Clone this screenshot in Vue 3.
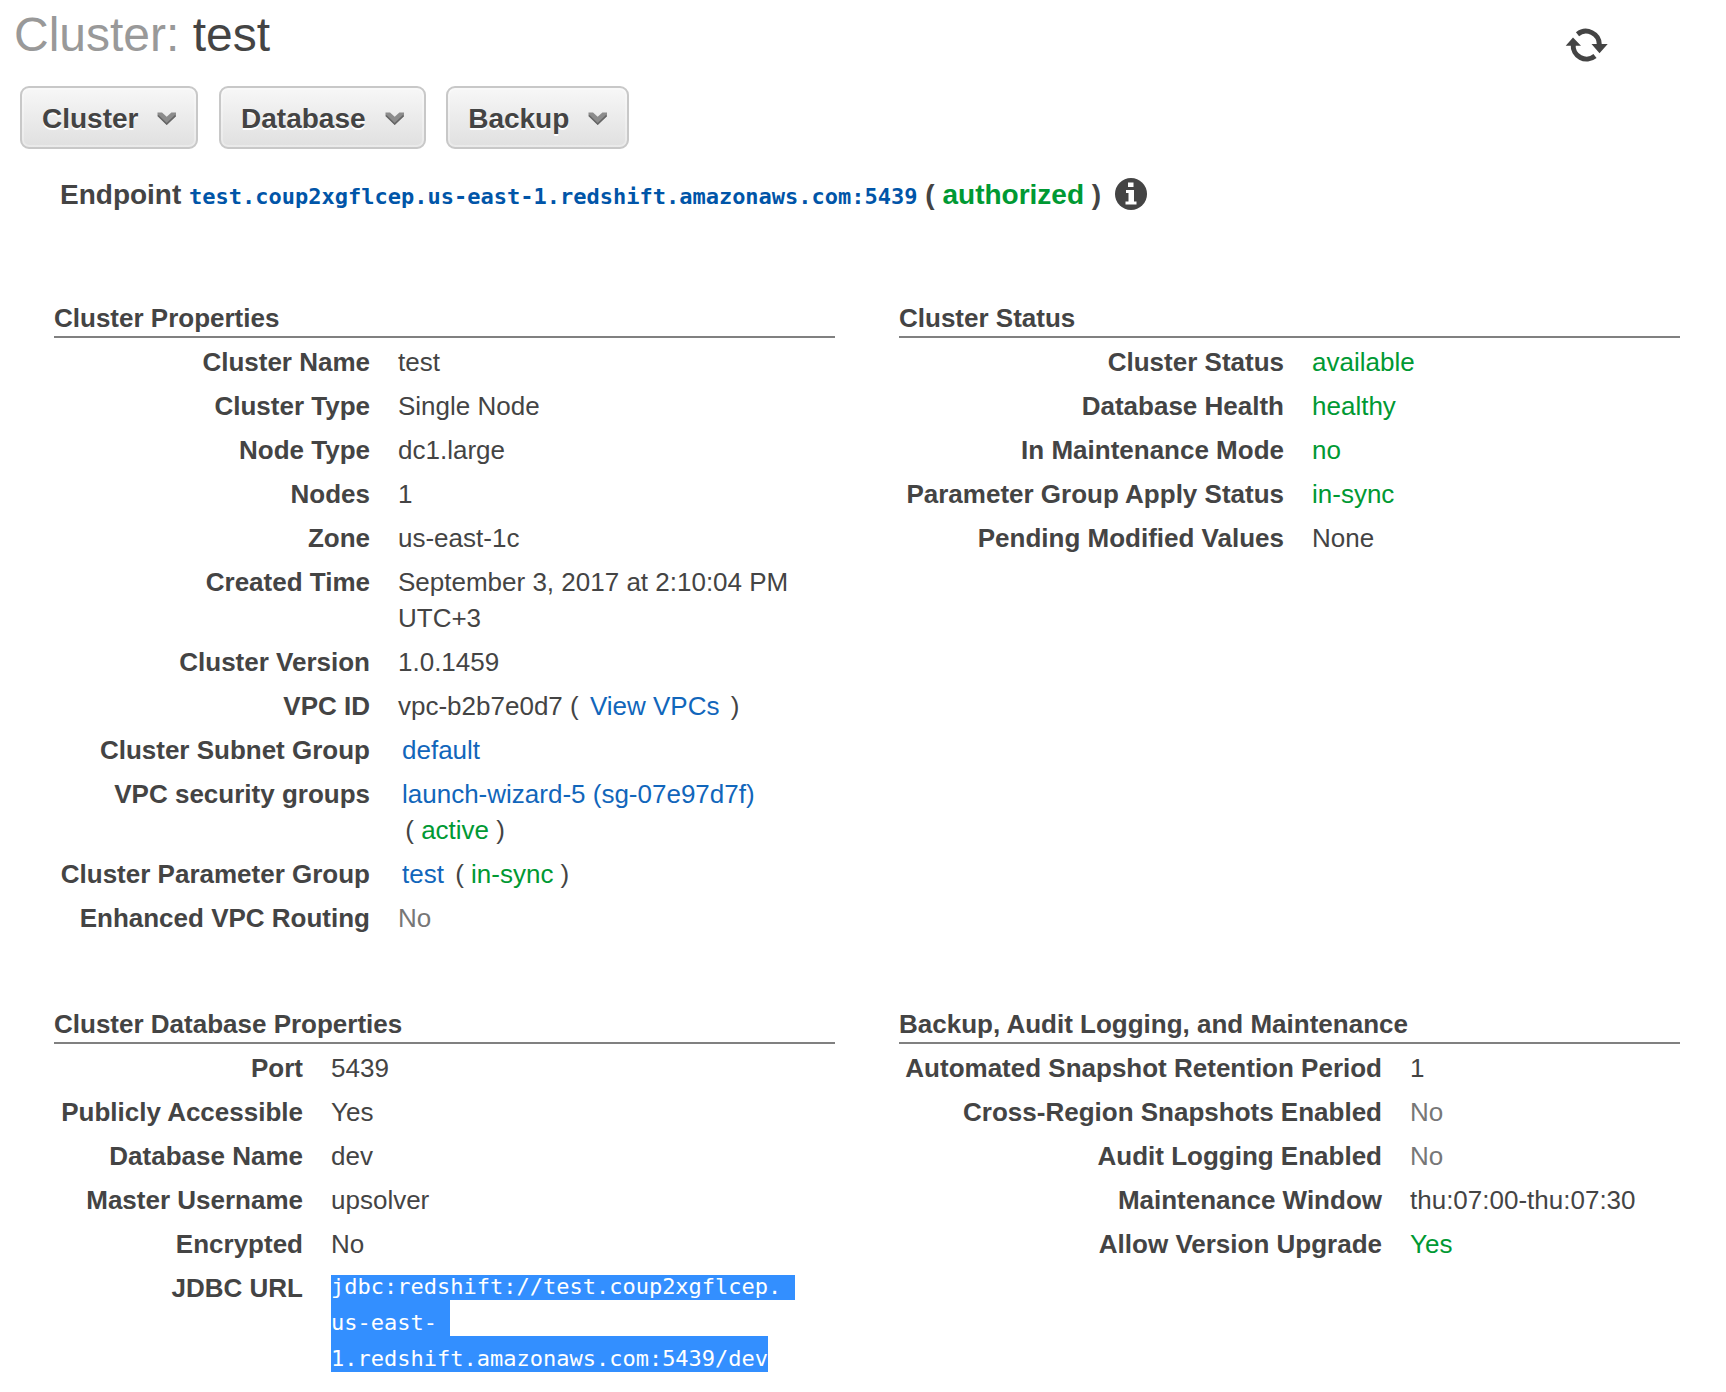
<script setup>
const menus = ['Cluster', 'Database', 'Backup']

const columns = [
  [
    {
      title: 'Cluster Properties',
      kind: 'properties',
      rows: [
        { label: 'Cluster Name', parts: [{ t: 'test' }] },
        { label: 'Cluster Type', parts: [{ t: 'Single Node' }] },
        { label: 'Node Type', parts: [{ t: 'dc1.large' }] },
        { label: 'Nodes', parts: [{ t: '1' }] },
        { label: 'Zone', parts: [{ t: 'us-east-1c' }] },
        { label: 'Created Time', parts: [{ t: 'September 3, 2017 at 2:10:04 PM UTC+3' }] },
        { label: 'Cluster Version', parts: [{ t: '1.0.1459' }] },
        { label: 'VPC ID', parts: [{ t: 'vpc-b2b7e0d7 ( ' }, { t: 'View VPCs', c: 'link' }, { t: ' )' }] },
        { label: 'Cluster Subnet Group', parts: [{ t: 'default', c: 'link' }] },
        {
          label: 'VPC security groups',
          parts: [
            { t: 'launch-wizard-5 (sg-07e97d7f)', c: 'link' },
            { t: '\n' },
            { t: ' ( ' },
            { t: 'active', c: 'good' },
            { t: ' )' },
          ],
        },
        {
          label: 'Cluster Parameter Group',
          parts: [{ t: 'test', c: 'link' }, { t: ' ( ' }, { t: 'in-sync', c: 'good' }, { t: ' )' }],
        },
        { label: 'Enhanced VPC Routing', parts: [{ t: 'No', c: 'muted' }] },
      ],
    },
    {
      title: 'Cluster Database Properties',
      kind: 'database',
      rows: [
        { label: 'Port', parts: [{ t: '5439' }] },
        { label: 'Publicly Accessible', parts: [{ t: 'Yes' }] },
        { label: 'Database Name', parts: [{ t: 'dev' }] },
        { label: 'Master Username', parts: [{ t: 'upsolver' }] },
        { label: 'Encrypted', parts: [{ t: 'No' }] },
        {
          label: 'JDBC URL',
          selected: ['jdbc:redshift://test.coup2xgflcep. ', 'us-east- ', '1.redshift.amazonaws.com:5439/dev'],
        },
      ],
    },
  ],
  [
    {
      title: 'Cluster Status',
      kind: 'status',
      rows: [
        { label: 'Cluster Status', parts: [{ t: 'available', c: 'good' }] },
        { label: 'Database Health', parts: [{ t: 'healthy', c: 'good' }] },
        { label: 'In Maintenance Mode', parts: [{ t: 'no', c: 'good' }] },
        { label: 'Parameter Group Apply Status', parts: [{ t: 'in-sync', c: 'good' }] },
        { label: 'Pending Modified Values', parts: [{ t: 'None' }] },
      ],
    },
    {
      title: 'Backup, Audit Logging, and Maintenance',
      kind: 'backup',
      rows: [
        { label: 'Automated Snapshot Retention Period', parts: [{ t: '1' }] },
        { label: 'Cross-Region Snapshots Enabled', parts: [{ t: 'No', c: 'muted' }] },
        { label: 'Audit Logging Enabled', parts: [{ t: 'No', c: 'muted' }] },
        { label: 'Maintenance Window', parts: [{ t: 'thu:07:00-thu:07:30' }] },
        { label: 'Allow Version Upgrade', parts: [{ t: 'Yes', c: 'good' }] },
      ],
    },
  ],
]
</script>

<template>
  <main class="page">
    <header class="head">
      <h1><span class="prefix">Cluster: </span>test</h1>
      <svg class="refresh" viewBox="0 0 44 34" width="44" height="34">
        <g fill="none" stroke="#444" stroke-width="5">
          <path d="M13.500 6.200A13.400 13.400 0 0 1 35.300 17" />
          <path d="M31 28A13.400 13.400 0 0 1 9.200 16.500" />
        </g>
        <path d="M27.500 16H43.700L35.500 25.300ZM1.700 17.800H17L9 9.500Z" fill="#444" />
      </svg>
    </header>

    <nav class="menus">
      <button v-for="m in menus" :key="m" type="button">
        <span>{{ m }}</span>
        <svg viewBox="0 0 20 14" width="20" height="14">
          <path d="M1.500 .5H6L10.700 4.800L15.400 .5H20V4L10.700 13L1.500 4Z" fill="#8c8c8c" />
          <path d="M2 3.500L10.700 12L19.500 3.500" fill="none" stroke="#666" stroke-width="1.600" />
        </svg>
      </button>
    </nav>

    <p class="endpoint">
      <span class="endpoint-text">Endpoint <code>test.coup2xgflcep.us-east-1.redshift.amazonaws.com:5439</code> ( <span class="good">authorized</span> )</span>
      <svg class="info" viewBox="0 0 32 32" width="32" height="32">
        <circle cx="16" cy="16" r="16" fill="#444" />
        <path d="M13 4.500H18.500V9H13ZM11 12H19V23.500H21.500V26.500H10.500V23.500H13.500V15H11Z" fill="#fff" />
      </svg>
    </p>

    <div class="columns">
      <div v-for="(col, i) in columns" :key="i" class="column">
        <section v-for="s in col" :key="s.title" :class="s.kind">
          <h2>{{ s.title }}</h2>
          <dl>
            <div v-for="r in s.rows" :key="r.label" class="row">
              <dt>{{ r.label }}</dt>
              <dd v-if="r.selected" class="jdbc"><mark v-for="line in r.selected" :key="line">{{ line }}</mark></dd>
              <dd v-else><span v-for="(p, k) in r.parts" :key="k" :class="p.c">{{ p.t }}</span></dd>
            </div>
          </dl>
        </section>
      </div>
    </div>
  </main>
</template>

<style>
body {
  margin: 0;
  background: #fff;
}
</style>

<style scoped>
.page {
  box-sizing: border-box;
  width: 1726px;
  height: 1392px;
  overflow: hidden;
  font-family: "Liberation Sans", Arial, sans-serif;
  font-size: 26px;
  line-height: 36px;
  color: #444;
}
.head {
  display: flex;
  justify-content: space-between;
  height: 86px;
  padding: 0 118px 0 14px;
  box-sizing: border-box;
}
h1 {
  margin: 7px 0 0;
  font-size: 48px;
  line-height: 56px;
  font-weight: 400;
}
.prefix {
  color: #999;
}
.refresh {
  margin-top: 28px;
}
.menus {
  display: flex;
  gap: 20.6px;
  padding-left: 20px;
}
button {
  display: flex;
  align-items: center;
  gap: 18px;
  box-sizing: border-box;
  height: 63px;
  margin: 0;
  padding: 2px 20px 0;
  border: 2px solid #c8c8c8;
  border-radius: 9px;
  background: linear-gradient(#f7f7f7, #e0e0e0);
  box-shadow: inset 0 0 0 2px rgba(255, 255, 255, .3);
  font: bold 28px/32px "Liberation Sans", Arial, sans-serif;
  color: #444;
  text-shadow: 0 2px 0 #fff;
}
.endpoint {
  display: flex;
  align-items: center;
  gap: 14px;
  height: 36px;
  margin: 27px 0 0 60px;
  font-size: 28px;
  font-weight: bold;
}
.endpoint-text {
  margin-top: 2px;
  white-space: pre;
}
code {
  font: bold 22px/1 "DejaVu Sans Mono", monospace;
  color: #0055a8;
}
.good {
  color: #093;
}
.muted {
  color: #777;
}
.link {
  margin: 0 4px;
  color: #1166bb;
}
.columns {
  display: flex;
  gap: 64px;
  margin: 88px 0 0 54px;
}
.column {
  width: 781px;
}
section {
  height: 706px;
}
h2 {
  margin: 0 0 2px;
  border-bottom: 2px solid #808080;
  font-size: 26px;
  line-height: 36px;
}
dl {
  margin: 0;
}
.row {
  display: flex;
  gap: 28px;
  padding: 4px 0;
}
dt {
  flex: none;
  font-weight: bold;
  text-align: right;
  white-space: nowrap;
}
dd {
  flex: 1;
  margin: 0;
  white-space: pre-wrap;
}
.properties dt {
  width: 316px;
}
.database dt {
  width: 249px;
}
.status dt {
  width: 385px;
}
.backup dt {
  width: 483px;
}
.jdbc {
  display: flex;
  flex-direction: column;
  align-items: flex-start;
  padding-top: 5px;
  font: 22px/23px "DejaVu Sans Mono", monospace;
}
mark {
  padding: 11px 0 2px;
  background: #338fff;
  color: #fff;
  white-space: pre;
}
mark:first-child {
  padding-top: 0;
}
</style>
